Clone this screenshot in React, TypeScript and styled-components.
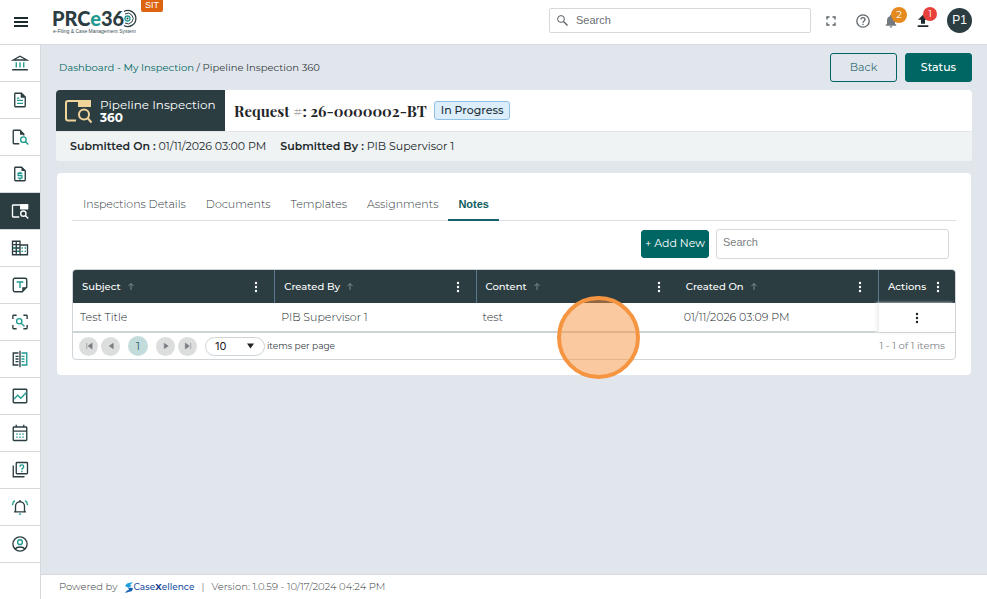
import React from "react";
import styled, { createGlobalStyle, css } from "styled-components";

const ink = "#2b3d41";
const teal = "#006663";
const accent = "#1f9a90";
const line = "#d5d9de";

const GlobalStyle = createGlobalStyle`
  *, *::before, *::after { box-sizing: border-box; }
  body {
    margin: 0;
    background: #fff;
    color: #333b40;
    font: 11px/16px Montserrat, Inter, sans-serif;
  }
  button, input, select { font: inherit; color: inherit; }
  button { cursor: pointer; }
  a { text-decoration: none; color: ${teal}; }
`;

const Page = styled.div`
  position: relative;
  min-height: 100vh;
  display: flex;
  flex-direction: column;
`;

const TopBar = styled.header`
  height: 45px;
  display: flex;
  align-items: flex-start;
  padding: 0 15px 0 13px;
  border-bottom: 1px solid ${line};
`;

const IconButton = styled.button`
  position: relative;
  display: flex;
  align-items: center;
  justify-content: center;
  width: 16px;
  height: 24px;
  padding: 0;
  border: 0;
  background: none;
  color: #5b646a;
  svg { flex: none; }
`;

const MenuButton = styled(IconButton)`
  margin-top: 10px;
  color: #1d2b30;
`;

const LogoLink = styled.a`
  margin: 7px 0 0 23px;
  svg { display: block; overflow: visible; }
`;

const EnvTag = styled.span`
  margin-left: 3px;
  padding: 0 4px;
  height: 12px;
  border-radius: 0 0 2px 2px;
  background: #dc6410;
  color: #fff;
  font: 9px/11px "Liberation Sans", sans-serif;
`;

const TopTools = styled.div`
  margin: 8px 0 0 auto;
  display: flex;
  align-items: center;
  gap: 12px;
`;

const ToolGroup = styled.div`
  display: flex;
  align-items: center;
  gap: 16px;
`;

const GlobalSearch = styled.label`
  display: flex;
  align-items: center;
  gap: 8px;
  width: 262px;
  height: 25px;
  padding: 0 7px;
  border: 1px solid ${line};
  border-radius: 2px;
  color: #555c62;
  svg { flex: none; }
`;

const PlainInput = styled.input`
  flex: 1;
  min-width: 0;
  padding: 0 0 2px;
  border: 0;
  outline: 0;
  background: none;
  font: 11px/16px "Liberation Sans", sans-serif;
  &::placeholder { color: #6b6f73; opacity: 1; }
`;

const Badge = styled.span<{ $color: string; $size: number }>`
  position: absolute;
  left: 8px;
  top: -2px;
  width: ${(p) => p.$size}px;
  height: ${(p) => p.$size}px;
  border-radius: 50%;
  background: ${(p) => p.$color};
  color: #fff;
  font-size: 10px;
  line-height: ${(p) => p.$size}px;
  text-align: center;
`;

const Avatar = styled.button`
  width: 25px;
  height: 25px;
  padding: 0;
  border: 0;
  border-radius: 50%;
  background: ${ink};
  color: #fff;
  font: 12px/25px "Liberation Sans", sans-serif;
`;

const Body = styled.div`
  flex: 1;
  display: flex;
`;

const SideNav = styled.nav`
  flex: none;
  width: 41px;
  border-right: 1px solid ${line};
`;

const NavItem = styled.a<{ $active?: boolean }>`
  display: flex;
  align-items: center;
  justify-content: center;
  height: 37px;
  border-bottom: 1px solid ${line};
  background: ${(p) => (p.$active ? ink : "#fff")};
`;

const Column = styled.div`
  flex: 1;
  min-width: 0;
  display: flex;
  flex-direction: column;
`;

const Main = styled.main`
  flex: 1;
  padding: 8px 15px;
  background: #e1e6ed;
`;

const PageHead = styled.div`
  display: flex;
  align-items: center;
  gap: 8px;
  margin-bottom: 8px;
`;

const Crumbs = styled.nav`
  flex: 1;
  padding-left: 3px;
  font-size: 10px;
  white-space: nowrap;
`;

const Button = styled.button<{ $outline?: boolean; $compact?: boolean }>`
  width: ${(p) => (p.$compact ? 68 : 67)}px;
  height: ${(p) => (p.$compact ? 28 : 29)}px;
  padding: 0 0 2px;
  border: 1px solid ${teal};
  border-radius: 3px;
  background: ${teal};
  color: #fff;
  font-size: 11px;
  font-weight: ${(p) => (p.$compact ? 400 : 500)};
  white-space: nowrap;
  ${(p) => p.$outline && css`background: none; color: #3a7478; font-weight: 400;`}
`;

const Summary = styled.section`
  border-radius: 4px;
  overflow: hidden;
  background: #fff;
`;

const SummaryTop = styled.div`
  display: flex;
  align-items: center;
  height: 41px;
`;

const ModuleTag = styled.div`
  align-self: stretch;
  display: flex;
  align-items: center;
  gap: 8px;
  width: 169px;
  padding-left: 8px;
  background: ${ink};
  color: #fff;
  font-size: 12px;
  line-height: 13px;
`;

const ModuleName = styled.div`
  display: flex;
  flex-direction: column;
  strong { font-weight: 700; }
`;

const RequestTitle = styled.h1`
  margin: 0 7px 0 9px;
  color: #1f2528;
  font: 700 15px/24px "Playfair Display", "Liberation Serif", serif;
  span { font-weight: 400; color: #777; }
`;

const StatusChip = styled.span`
  height: 19px;
  padding: 0 6px;
  border: 1px solid #8fc0e4;
  border-radius: 3px;
  background: #dcedfb;
  color: #22323a;
  font-weight: 500;
  line-height: 16px;
`;

const SummaryMeta = styled.div`
  display: flex;
  align-items: center;
  gap: 14px;
  height: 30px;
  padding: 0 0 2px 14px;
  border-top: 1px solid #e2e6e8;
  background: #eff3f4;
  color: #22282b;
  strong { font-weight: 600; }
`;

const Card = styled.section`
  margin: 12px 1px 0;
  padding: 15px;
  border-radius: 4px;
  background: #fff;
`;

const Tabs = styled.div`
  display: flex;
  height: 33px;
  padding-left: 1px;
  border-bottom: 1px solid #dcdfe2;
`;

const Tab = styled.button<{ $active?: boolean }>`
  height: 33px;
  padding: 0 10px;
  border: 0;
  border-bottom: 2px solid transparent;
  background: none;
  color: #2f373c;
  font-weight: 300;
  white-space: nowrap;
  ${(p) =>
    p.$active &&
    css`
      border-color: #17616a;
      color: #10605f;
      font: 700 11px/16px "Liberation Sans", sans-serif;
    `}
`;

const Toolbar = styled.div`
  display: flex;
  align-items: center;
  justify-content: flex-end;
  gap: 7px;
  padding: 8px 7px 10px;
`;

const GridSearch = styled.input`
  width: 233px;
  height: 30px;
  padding: 0 6px 4px;
  border: 1px solid ${line};
  border-radius: 3px;
  outline: 0;
  font: 11px/16px "Liberation Sans", sans-serif;
  &::placeholder { color: #7b7f83; opacity: 1; }
`;

const GridBox = styled.div`
  border: 1px solid #d0d5d9;
  border-radius: 4px;
  overflow: hidden;
`;

const Table = styled.table`
  width: 100%;
  table-layout: fixed;
  border-collapse: separate;
  border-spacing: 0;
  text-align: left;
`;

const HeadCell = styled.th<{ $rule?: boolean; $action?: boolean }>`
  width: ${(p) => (p.$action ? "77px" : "auto")};
  height: 33px;
  padding: 0 ${(p) => (p.$action ? 12 : 10)}px 0 9px;
  border-left: ${(p) => (p.$rule ? "1px solid #5b7a90" : "0")};
  background: ${ink};
  color: #fff;
  font-size: 10px;
  font-weight: 500;
`;

const HeadInner = styled.div`
  display: flex;
  align-items: center;
  gap: 6px;
  white-space: nowrap;
  button { margin-left: auto; color: #fff; }
`;

const Cell = styled.td<{ $action?: boolean }>`
  height: 30px;
  padding: 0 7px;
  border-bottom: 2px solid #cdd2d5;
  color: #20282c;
  font-weight: 300;
  ${(p) =>
    p.$action &&
    css`
      border-bottom-width: 1px;
      border-left: 1px solid #eceeef;
      box-shadow: -2px 0 3px #f1f2f3;
      button { margin: 0 auto; color: #1b2225; }
    `}
`;

const Pager = styled.div`
  display: flex;
  align-items: center;
  height: 26px;
  padding: 0 10px 0 6px;
`;

const PageButton = styled.button<{ $current?: boolean }>`
  display: flex;
  align-items: center;
  justify-content: center;
  width: 19px;
  height: 19px;
  margin-right: 3px;
  padding: 0;
  border: 0;
  border-radius: 50%;
  background: #dcdddd;
  color: #777c80;
  ${(p) =>
    p.$current &&
    css`
      width: 20px;
      height: 20px;
      margin: 0 8px 0 5px;
      background: #c3dcdb;
      color: #28605f;
    `}
`;

const SizeWrap = styled.label`
  display: flex;
  align-items: center;
  gap: 2px;
  margin-left: 5px;
  font-size: 9px;
`;

const SizeBox = styled.span`
  display: flex;
  align-items: center;
  width: 60px;
  height: 19px;
  padding: 0 10px 0 9px;
  border: 1px solid #d0d3d5;
  border-radius: 10px;
  svg { flex: none; pointer-events: none; }
`;

const SizeSelect = styled.select`
  flex: 1;
  min-width: 0;
  padding: 0;
  border: 0;
  outline: 0;
  appearance: none;
  background: none;
  color: #222;
  font: 11px/16px Inter, sans-serif;
`;

const ItemCount = styled.span`
  margin-left: auto;
  color: #7b8286;
  font-size: 10px;
`;

const Footer = styled.footer`
  display: flex;
  align-items: center;
  gap: 7px;
  height: 25px;
  padding-left: 18px;
  border-top: 1px solid ${line};
  color: #394044;
  font-size: 10px;
  font-weight: 300;
`;

const VendorLink = styled.a`
  display: flex;
  align-items: center;
  gap: 1px;
  color: #1c4fa3;
  font-size: 9px;
  font-weight: 500;
  strong { color: #123a8c; }
`;

const ClickRing = styled.div`
  position: absolute;
  left: 557px;
  top: 296px;
  width: 83px;
  height: 83px;
  border: 4px solid #f59542;
  border-radius: 50%;
  background: rgba(248, 148, 66, 0.5);
  pointer-events: none;
`;

function Glyph({ size = 18, children }: { size?: number; children: React.ReactNode }) {
  return (
    <svg width={size} height={size} viewBox="0 0 24 24" fill="none" stroke={ink} strokeWidth="1.8" aria-hidden="true">
      {children}
    </svg>
  );
}

const Kebab = () => (
  <svg width="4" height="12" viewBox="0 0 4 12" fill="currentColor" aria-hidden="true">
    <circle cx="2" cy="2" r="1.2" />
    <circle cx="2" cy="6" r="1.2" />
    <circle cx="2" cy="10" r="1.2" />
  </svg>
);

const SortArrow = () => (
  <svg width="8" height="9" viewBox="0 0 8 9" fill="none" stroke="#7e8b8e" aria-hidden="true">
    <path d="M4 8V1.5M1.5 4L4 1.5 6.5 4" />
  </svg>
);

const navItems: { label: string; active?: boolean; art: React.ReactNode }[] = [
  {
    label: "Institutions",
    art: (
      <Glyph>
        <path d="M3 8L12 3l9 5zM1.500 21h21" />
        <path d="M7 11v7M12 11v7M17 11v7" stroke={accent} />
      </Glyph>
    ),
  },
  {
    label: "Documents",
    art: (
      <Glyph>
        <path d="M14 3H6a1 1 0 0 0-1 1v16a1 1 0 0 0 1 1h12a1 1 0 0 0 1-1V8z" />
        <path d="M13 2v7h7z" fill={ink} stroke="none" />
        <path d="M8 12.500h8M8 16.500h8M8 9.500h3" stroke={accent} />
      </Glyph>
    ),
  },
  {
    label: "Document search",
    art: (
      <Glyph>
        <path d="M11 21H4a1 1 0 0 1-1-1V4a1 1 0 0 1 1-1h8l5 5v2" />
        <path d="M12 2v7h6z" fill={ink} stroke="none" />
        <circle cx="16.500" cy="15.500" r="3.700" stroke={accent} />
        <path d="M19 18l4 4" stroke={accent} />
      </Glyph>
    ),
  },
  {
    label: "Payments",
    art: (
      <Glyph>
        <path d="M14 3H6a1 1 0 0 0-1 1v16a1 1 0 0 0 1 1h12a1 1 0 0 0 1-1V8z" />
        <path d="M14 2v6h6z" fill={ink} stroke="none" />
        <path d="M15 11H9.500v3H14.500v3.500H9M12 9v2M12 17.500v2" stroke={accent} />
      </Glyph>
    ),
  },
  {
    label: "Inspections",
    active: true,
    art: (
      <Glyph>
        <path d="M11 20H3a1 1 0 0 1-1-1V5a1 1 0 0 1 1-1h19v5" stroke="#fff" />
        <path d="M13 4h9v5h-9z" fill="#fff" stroke="#fff" />
        <circle cx="16.500" cy="15.500" r="3.500" stroke="#fff" />
        <path d="M19 18l4 4" stroke="#fff" />
      </Glyph>
    ),
  },
  {
    label: "Companies",
    art: (
      <Glyph>
        <path d="M2 3h10v18H2zM7 3v18M2 7.500h10M2 12h10M2 16.500h10" />
        <path d="M12 8h10v13H12" />
        <path d="M14 12h2M18 12h2M14 16.500h2M18 16.500h2M3 12h3M8 16.500h3" stroke={accent} />
      </Glyph>
    ),
  },
  {
    label: "Templates",
    art: (
      <Glyph>
        <path d="M15 21H5a2 2 0 0 1-2-2V5a2 2 0 0 1 2-2h14a2 2 0 0 1 2 2v10z" />
        <path d="M15 21v-6h6z" fill={ink} stroke="none" />
        <path d="M7.500 8h9M12 8v8" stroke={accent} />
      </Glyph>
    ),
  },
  {
    label: "Scan",
    art: (
      <Glyph>
        <path d="M2.500 8V4a1 1 0 0 1 1-1h4M16.500 3h4a1 1 0 0 1 1 1v4M21.500 16v4a1 1 0 0 1-1 1h-4M7.500 21h-4a1 1 0 0 1-1-1v-4" />
        <circle cx="11" cy="11" r="3.500" stroke={accent} />
        <path d="M13.500 13.500l4.500 4.500" stroke={accent} />
      </Glyph>
    ),
  },
  {
    label: "Compare",
    art: (
      <Glyph>
        <path d="M10 4H3v16h7M12 1v22M6 8.500h4M6 12h4M6 15.500h4" />
        <path d="M14 4h7v16h-7M14 8.500h4M14 12h4M14 15.500h4" stroke={accent} />
      </Glyph>
    ),
  },
  {
    label: "Reports",
    art: (
      <Glyph>
        <rect x="3" y="3" width="18" height="18" rx="1" />
        <path d="M4 16l5-5 4 4 8-8" stroke={accent} />
      </Glyph>
    ),
  },
  {
    label: "Calendar",
    art: (
      <Glyph>
        <rect x="3" y="4" width="18" height="18" rx="1" />
        <path d="M7 1v3M17 1v3M3 9.500h18" />
        <path d="M7 13.500h2M11 13.500h2M15 13.500h2M7 17.500h2M11 17.500h2M15 17.500h2" stroke={accent} />
      </Glyph>
    ),
  },
  {
    label: "Help topics",
    art: (
      <Glyph>
        <rect x="7" y="2" width="15" height="15" rx="1" />
        <path d="M3 6v15h15" />
        <path d="M12 7.500c0-3 5-3 5 0 0 2-2.500 2-2.500 4M14.500 13v2" stroke={accent} />
      </Glyph>
    ),
  },
  {
    label: "Alerts",
    art: (
      <Glyph>
        <path d="M4 18.500h16M6 18V11a6 6 0 0 1 12 0v7M12 2.500V5" />
        <path d="M2 9.500C2 7 3.500 4.500 5 3.500M22 9.500c0-2.500-1.500-5-3-6M10.500 21.500h3" stroke={accent} />
      </Glyph>
    ),
  },
  {
    label: "Account",
    art: (
      <Glyph>
        <circle cx="12" cy="12" r="9.500" />
        <circle cx="12" cy="9.500" r="3.200" stroke={accent} />
        <path d="M5 19c3.500-4 10.500-4 14 0" />
      </Glyph>
    ),
  },
];

const columns = ["Subject", "Created By", "Content", "Created On"];
const record = ["Test Title", "PIB Supervisor 1", "test", "01/11/2026 03:09 PM"];
const tabs = ["Inspections Details", "Documents", "Templates", "Assignments", "Notes"];

const pageArrows = {
  first: "M2 1v7M8 1L3.500 4.500 8 8z",
  prev: "M7 1.500L2.500 4.500 7 7.500z",
  next: "M2.500 1.500L7 4.500 2.500 7.500z",
  last: "M7.500 1v7M1.500 1L6 4.500 1.500 8z",
};

function PageArrow({ kind }: { kind: keyof typeof pageArrows }) {
  return (
    <PageButton type="button" aria-label={`Go to ${kind} page`}>
      <svg width="8" height="8" viewBox="0 0 9 9" fill="currentColor" stroke="currentColor" strokeWidth="0.6">
        <path d={pageArrows[kind]} />
      </svg>
    </PageButton>
  );
}

function BrandLogo() {
  return (
    <svg width="86" height="30" viewBox="0 0 86 30" role="img" aria-label="PRCe360">
      <text x="0" y="19" fontFamily="Lato, sans-serif" fontWeight="900" fontSize="20">
        <tspan fill={ink}>PRC</tspan>
        <tspan fill={accent}>e</tspan>
        <tspan fill={ink}>36</tspan>
      </text>
      <g fill="none" stroke={ink}>
        <path d="M72 4.500a8 8 0 1 1 0 14" strokeWidth="1.300" />
        <path d="M73 7a5.300 5.300 0 1 1 0 9" />
        <circle cx="75.500" cy="11.500" r="2.500" stroke={accent} strokeWidth="1.300" />
      </g>
      <circle cx="75.500" cy="11.500" r="1" fill={ink} />
      <text x="1" y="26" fill="#3d4f56" fontFamily="Liberation Sans, sans-serif" fontSize="5">
        e-Filing &amp; Case Management System
      </text>
    </svg>
  );
}

export default function App() {
  return (
    <Page>
      <GlobalStyle />
      <TopBar>
        <MenuButton type="button" aria-label="Toggle menu">
          <svg width="14" height="12" viewBox="0 0 14 12" stroke="currentColor" strokeWidth="2">
            <path d="M0 2h14M0 6h14M0 10h14" />
          </svg>
        </MenuButton>
        <LogoLink href="#home">
          <BrandLogo />
        </LogoLink>
        <EnvTag>SIT</EnvTag>
        <TopTools>
          <GlobalSearch>
            <svg width="11" height="11" viewBox="0 0 11 11" fill="none" stroke="currentColor">
              <circle cx="4" cy="4" r="3.400" />
              <path d="M6.500 6.500l4 4" strokeWidth="1.300" />
            </svg>
            <PlainInput type="search" placeholder="Search" aria-label="Search site" />
          </GlobalSearch>
          <ToolGroup>
            <IconButton type="button" aria-label="Full screen">
              <svg width="10" height="10" viewBox="0 0 10 10" fill="none" stroke="currentColor" strokeWidth="1.400">
                <path d="M1 3.500V1h2.500M6.500 1H9v2.500M9 6.500V9H6.500M3.500 9H1V6.500" />
              </svg>
            </IconButton>
            <IconButton type="button" aria-label="Help">
              <svg width="14" height="14" viewBox="0 0 14 14" fill="none" stroke="currentColor" strokeWidth="1.300">
                <circle cx="7" cy="7" r="6.200" />
                <path d="M5 5.600c0-2.600 4-2.600 4 0C9 7 7 7 7 8.700M7 9.700V11" />
              </svg>
            </IconButton>
          </ToolGroup>
          <ToolGroup>
            <IconButton type="button" aria-label="Notifications">
              <svg width="16" height="16" viewBox="0 0 24 24" fill="#737b80">
                <path d="M12 22a2 2 0 0 0 2-2h-4a2 2 0 0 0 2 2zm6-6v-5c0-3.100-1.600-5.600-4.500-6.300V4a1.500 1.500 0 0 0-3 0v.7C7.600 5.400 6 7.900 6 11v5l-2 2v1h16v-1z" />
              </svg>
              <Badge $color="#e48a1e" $size={16}>2</Badge>
            </IconButton>
            <IconButton type="button" aria-label="Uploads">
              <svg width="16" height="16" viewBox="0 0 24 24" fill="#1d2b30">
                <path d="M9 16h6v-6h4.500L12 2.500 4.500 10H9zM4 18.500h16V21H4z" />
              </svg>
              <Badge $color="#e8403a" $size={14}>1</Badge>
            </IconButton>
            <Avatar type="button">P1</Avatar>
          </ToolGroup>
        </TopTools>
      </TopBar>

      <Body>
        <SideNav aria-label="Modules">
          {navItems.map((item) => (
            <NavItem key={item.label} href="#module" aria-label={item.label} $active={item.active}>
              {item.art}
            </NavItem>
          ))}
        </SideNav>
        <Column>
          <Main>
            <PageHead>
              <Crumbs aria-label="Breadcrumb">
                <a href="#inspections">Dashboard - My Inspection</a> / Pipeline Inspection 360
              </Crumbs>
              <Button type="button" $outline>Back</Button>
              <Button type="button">Status</Button>
            </PageHead>

            <Summary>
              <SummaryTop>
                <ModuleTag>
                  <svg width="28" height="26" viewBox="0 0 28 26" fill="none" stroke="#f1d49a" strokeWidth="2">
                    <path d="M12 22.500H4a2 2 0 0 1-2-2V5a2 2 0 0 1 2-2h22v6" />
                    <path d="M15 3h11v5H15z" fill="#f1d49a" />
                    <circle cx="20" cy="16.500" r="5" />
                    <path d="M23.500 20l4 4.500" />
                  </svg>
                  <ModuleName>
                    <span>Pipeline Inspection</span>
                    <strong>360</strong>
                  </ModuleName>
                </ModuleTag>
                <RequestTitle>
                  Request <span>#</span>: 26-0000002-BT
                </RequestTitle>
                <StatusChip>In Progress</StatusChip>
              </SummaryTop>
              <SummaryMeta>
                <span><strong>Submitted On :</strong> 01/11/2026 03:00 PM</span>
                <span><strong>Submitted By :</strong> PIB Supervisor 1</span>
              </SummaryMeta>
            </Summary>

            <Card>
              <Tabs role="tablist">
                {tabs.map((tab) => (
                  <Tab key={tab} type="button" role="tab" aria-selected={tab === "Notes"} $active={tab === "Notes"}>
                    {tab}
                  </Tab>
                ))}
              </Tabs>
              <Toolbar>
                <Button type="button" $compact>+ Add New</Button>
                <GridSearch type="search" placeholder="Search" aria-label="Search notes" />
              </Toolbar>
              <GridBox>
                <Table>
                  <thead>
                    <tr>
                      {columns.map((name, i) => (
                        <HeadCell key={name} $rule={i === 1 || i === 2}>
                          <HeadInner>
                            {name}
                            <SortArrow />
                            <IconButton type="button" aria-label={`${name} column menu`}><Kebab /></IconButton>
                          </HeadInner>
                        </HeadCell>
                      ))}
                      <HeadCell $rule $action>
                        <HeadInner>
                          Actions
                          <IconButton type="button" aria-label="Actions column menu"><Kebab /></IconButton>
                        </HeadInner>
                      </HeadCell>
                    </tr>
                  </thead>
                  <tbody>
                    <tr>
                      {record.map((value) => (
                        <Cell key={value}>{value}</Cell>
                      ))}
                      <Cell $action>
                        <IconButton type="button" aria-label="Row actions"><Kebab /></IconButton>
                      </Cell>
                    </tr>
                  </tbody>
                </Table>
                <Pager>
                  <PageArrow kind="first" />
                  <PageArrow kind="prev" />
                  <PageButton type="button" $current>1</PageButton>
                  <PageArrow kind="next" />
                  <PageArrow kind="last" />
                  <SizeWrap>
                    <SizeBox>
                      <SizeSelect defaultValue="10">
                        <option>10</option>
                        <option>20</option>
                        <option>50</option>
                      </SizeSelect>
                      <svg width="7" height="6" viewBox="0 0 7 6" fill="#222"><path d="M0 0.500h7L3.500 5.500z" /></svg>
                    </SizeBox>
                    items per page
                  </SizeWrap>
                  <ItemCount>1 - 1 of 1 items</ItemCount>
                </Pager>
              </GridBox>
            </Card>
          </Main>
          <Footer>
            <span>Powered by</span>
            <VendorLink href="#vendor">
              <svg width="8" height="11" viewBox="0 0 8 11">
                <path d="M8 0L2 1.500 0 4l3 1.500L7 4 5 3z" fill="#1ba0dc" />
                <path d="M3 5.500L8 6 7 9l-7 2 2-2.500 2-.5z" fill="#1560b4" />
              </svg>
              <span>Case<strong>X</strong>ellence</span>
            </VendorLink>
            <span>|</span>
            <span>Version: 1.0.59 - 10/17/2024 04:24 PM</span>
          </Footer>
        </Column>
      </Body>
      <ClickRing />
    </Page>
  );
}
